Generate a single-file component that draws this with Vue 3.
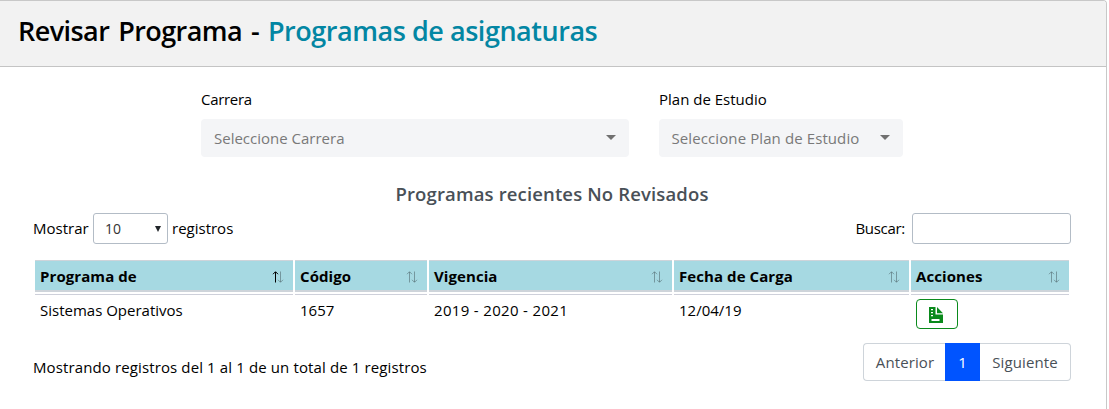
<script setup>
const columns = [
  { key: 'programa', label: 'Programa de', sorted: true },
  { key: 'codigo', label: 'Código' },
  { key: 'vigencia', label: 'Vigencia' },
  { key: 'fecha', label: 'Fecha de Carga' },
  { key: 'acciones', label: 'Acciones' }
]
const rows = [
  { programa: 'Sistemas Operativos', codigo: '1657', vigencia: '2019 - 2020 - 2021', fecha: '12/04/19' }
]
</script>

<template>
  <section class="card">
    <header class="card-header">
      <h1><span class="lead">Revisar Programa - </span><span class="accent">Programas de asignaturas</span></h1>
    </header>

    <div class="filters">
      <div class="field career">
        <label><span class="t-carrera">Carrera</span></label>
        <div class="picker"><span>Seleccione Carrera</span><i class="caret"></i></div>
      </div>
      <div class="field plan">
        <label><span>Plan de Estudio</span></label>
        <div class="picker"><span class="t-selplan">Seleccione Plan de Estudio</span><i class="caret"></i></div>
      </div>
    </div>

    <h2><span>Programas recientes No Revisados</span></h2>

    <div class="toolbar">
      <div class="length">
        <span class="t-mostrar">Mostrar</span>
        <div class="select">
          <span>10</span>
          <svg width="6" height="6" viewBox="0 0 6 6"><path d="M0 0H6L3 6Z" fill="#212529" /></svg>
        </div>
        <span>registros</span>
      </div>
      <label class="search"><span>Buscar:</span><input type="text" /></label>
    </div>

    <table>
      <colgroup><col v-for="c in columns" :key="c.key" :class="c.key" /></colgroup>
      <thead>
        <tr>
          <th v-for="c in columns" :key="c.key">
            <div class="head">
              <span>{{ c.label }}</span>
              <svg width="12" height="12" viewBox="0 0 12 12" fill="none" stroke="#000">
                <path :opacity="c.sorted ? 1 : 0.3" d="M3.5 11.5V1M1 3.2L3.5.7L6 3.2" />
                <path opacity=".3" d="M8.5 .5V11M6 8.8L8.5 11.3L11 8.8" />
              </svg>
            </div>
          </th>
        </tr>
      </thead>
      <tbody>
        <tr v-for="r in rows" :key="r.codigo">
          <td><span>{{ r.programa }}</span></td>
          <td><span>{{ r.codigo }}</span></td>
          <td><span class="d-vigencia">{{ r.vigencia }}</span></td>
          <td><span>{{ r.fecha }}</span></td>
          <td class="actions">
            <button type="button" aria-label="Revisar">
              <svg width="14" height="16" viewBox="0 0 14 16">
                <path fill="#0a8a1c" fill-rule="evenodd" d="M0 0H6.500V7.500H14V16H0ZM2 2V3.300H4V2ZM2 5V6.300H4V5ZM2 8V9.300H4V8ZM2.500 12V14H10.500V12ZM8 0L14 6.300H8Z" />
              </svg>
            </button>
          </td>
        </tr>
      </tbody>
    </table>

    <footer>
      <span class="info">Mostrando registros del 1 al 1 de un total de 1 registros</span>
      <nav>
        <span class="page prev"><b>Anterior</b></span>
        <span class="page current">1</span>
        <span class="page next"><b>Siguiente</b></span>
      </nav>
    </footer>
  </section>
</template>

<style>
body { background: #fff; }
</style>

<style scoped>
* { box-sizing: border-box; }
.card {
  width: 1107px;
  height: 409px;
  border: 1px solid #c8c8c8;
  border-width: 1px 1px 0 0;
  border-top-right-radius: 4px;
  font-family: "Open Sans", "Noto Sans", sans-serif;
  font-size: 15px;
  line-height: 24px;
  color: #000;
  overflow: hidden;
  white-space: nowrap;
}
.card-header {
  height: 66px;
  padding: 12px 18px;
  background: #f2f2f2;
  border-bottom: 1px solid #c4c4c4;
}
h1 { margin: 0; font-size: 27px; line-height: 36px; font-weight: 600; white-space: pre; }
.lead { letter-spacing: -.56px; word-spacing: 2.4px; }
.accent { color: #0386a3; letter-spacing: -.46px; }
.filters { display: flex; gap: 30px; padding: 20px 0 0 201px; }
.career { width: 428px; }
.plan { width: 244px; }
label { display: block; }
.t-carrera { letter-spacing: -.3px; }
.t-selplan { letter-spacing: .1px; }
.picker {
  display: flex;
  align-items: center;
  justify-content: space-between;
  height: 38px;
  margin-top: 8px;
  padding: 0 13px;
  border-radius: 4px;
  background: #f4f5f7;
  color: #797979;
}
.plan .picker { padding-left: 12.5px; }
.caret {
  margin-top: -2px;
  border: 5px solid transparent;
  border-top-color: #707070;
  border-bottom: 0;
}
h2 {
  margin: 24px 0 0;
  padding-right: 2px;
  text-align: center;
  font-size: 18.5px;
  letter-spacing: .14px;
  line-height: 26px;
  font-weight: 600;
  color: #495057;
}
.toolbar {
  display: flex;
  justify-content: space-between;
  height: 31px;
  margin: 6px 35px 0 33px;
  line-height: 31px;
}
.length { display: flex; }
.t-mostrar { width: 60px; }
.select {
  display: flex;
  align-items: center;
  justify-content: space-between;
  width: 75px;
  margin-right: 4px;
  padding: 0 6px 0 11px;
  border: 1px solid #b3bcc6;
  border-radius: 3px;
  font-size: 14px;
  color: #333;
}
.search { display: flex; gap: 7px; letter-spacing: -.3px; }
input { width: 159px; height: 31px; border: 1px solid #b3bcc6; border-radius: 3px; background: #fff; }
table {
  width: 1038px;
  margin: 14px 0 0 33px;
  border-spacing: 2px;
  table-layout: fixed;
}
col.programa { width: 258px; }
col.codigo { width: 132px; }
col.vigencia { width: 243px; }
col.fecha { width: 235px; }
col.acciones { width: 158px; }
th {
  height: 32px;
  padding: 0 9px 0 5px;
  border-top: 1px solid #ced4da;
  border-bottom: 2px solid #ced4da;
  background: #a6d9e2;
  text-align: left;
  letter-spacing: .08px;
}
.head { display: flex; align-items: center; justify-content: space-between; }
.head svg { position: relative; top: 1px; }
td { height: 36px; padding: 3px 5px 0; border-top: 1px solid #ced0da; vertical-align: top; }
td.actions { padding-top: 4px; }
.d-vigencia { letter-spacing: .33px; }
button {
  display: flex;
  align-items: center;
  justify-content: center;
  width: 42px;
  height: 30px;
  padding: 0 2px 0 0;
  border: 1px solid #0a8a1c;
  border-radius: 4px;
  background: #fff;
}
button svg { margin-top: 1px; }
footer { display: flex; justify-content: space-between; margin: 11px 35px 0 33px; }
.info { padding-top: 12px; letter-spacing: .12px; }
nav { display: flex; height: 38px; color: #495057; }
.page { border: 1px solid #ced4da; line-height: 37px; text-align: center; }
.page b { font-weight: 400; letter-spacing: .1px; }
.prev { width: 82px; padding-left: 1px; border-right: 0; border-radius: 4px 0 0 4px; }
.current { width: 35px; border-color: #0054ff; background: #0054ff; color: #fff; }
.next { width: 91px; border-left: 0; border-radius: 0 4px 4px 0; }
</style>
